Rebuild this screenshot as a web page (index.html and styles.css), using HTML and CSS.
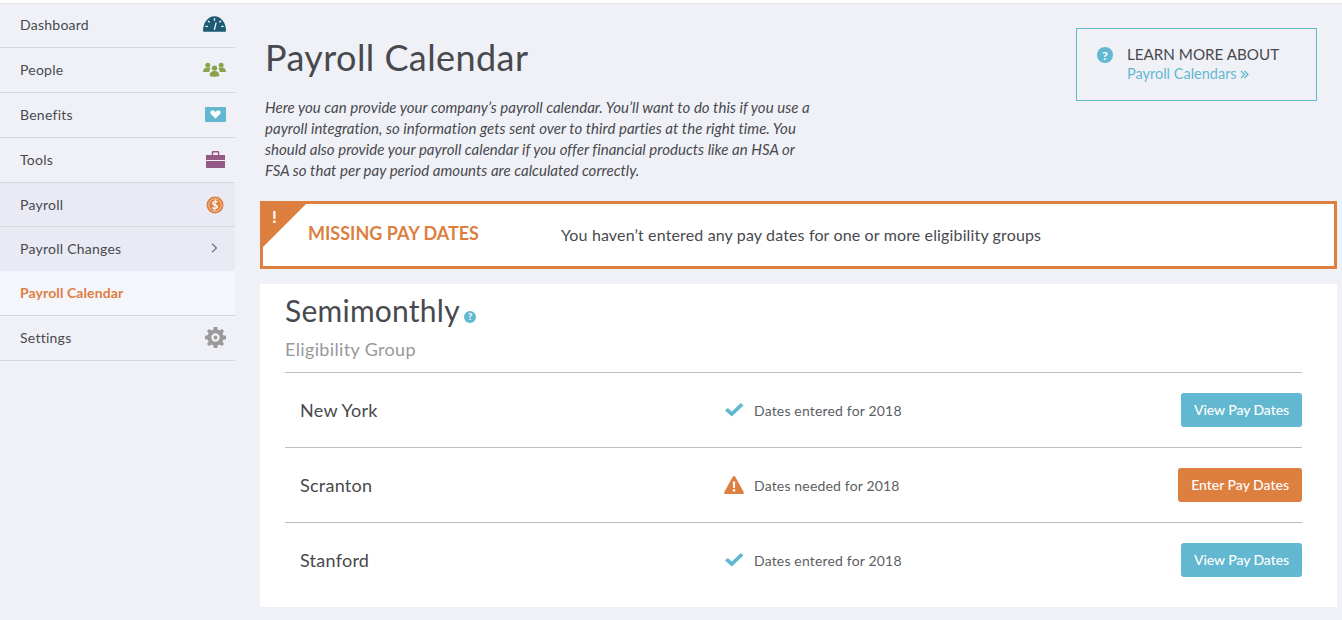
FILE: index.html
```html
<!DOCTYPE html>
<html lang="en">
<head>
    <meta charset="UTF-8">
    <title>Payroll Calendar</title>
    <link rel="stylesheet" href="styles.css">
</head>
<body>

<div class="layout">
    <div class="sidebar">
        <a class="nav-item">Dashboard
            <svg class="nav-icon" width="23" height="16" viewBox="0 0 24 16"><path fill="#1d5a73" d="M0 15C0 6.500 5.400 0 12 0s12 6.500 12 15c0 .6-.3 1-1 1H1c-.7 0-1-.4-1-1z"/><path stroke="#f0f1f7" stroke-width="1.400" stroke-linecap="round" d="M12 13.500l1.600-6.500M12 2.500v1.500M5.500 5l1 1M18.500 5l-1 1M3 10.500h1.500M21 10.500h-1.500"/></svg>
        </a>
        <a class="nav-item">People
            <svg class="nav-icon" width="23" height="15" viewBox="0 0 24 15"><g fill="#8aa349"><circle cx="5" cy="3" r="2.600"/><circle cx="19" cy="3" r="2.600"/><path d="M0 10c0-3 2-4.500 5-4.500 1.500 0 2.500.4 3 1-1 1-1.500 2-1.500 3.500H1c-.6 0-1 0-1-.001zM24 10c0-3-2-4.500-5-4.500-1.500 0-2.500.4-3 1 1 1 1.500 2 1.500 3.500H23c.6 0 1 0 1-.001z"/><circle cx="12" cy="6" r="2.800"/><path d="M7 13.500c0-3 2-4.500 5-4.500s5 1.500 5 4.500c0 1-1 1.500-5 1.500s-5-.5-5-1.500z"/></g></svg>
        </a>
        <a class="nav-item">Benefits
            <svg class="nav-icon" width="21" height="15" viewBox="0 0 20 15" preserveAspectRatio="none"><rect width="20" height="15" rx="1" fill="#62b8d1"/><path fill="#fff" d="M10 11.500L5.800 7.300C4.300 5.500 5.400 3.500 7.200 3.500c1.200 0 2.200.7 2.800 1.600.6-.9 1.600-1.600 2.800-1.600 1.800 0 2.900 2 1.400 3.800z"/></svg>
        </a>
        <a class="nav-item">Tools
            <svg class="nav-icon nav-tools" width="19" height="17" viewBox="0 0 20 17" preserveAspectRatio="none"><g fill="#945a85"><path d="M0 4h20v5H0zM0 10h20v7H0z"/><path d="M6 4V1.500C6 .7 6.500 0 7.500 0h5c1 0 1.500.7 1.500 1.500V4h-1.500V1.500h-5V4z"/></g></svg>
        </a>
        <a class="nav-item nav-open nav-parent">Payroll
            <svg class="nav-icon nav-coin" width="18" height="18" viewBox="0 0 18 18"><circle cx="9" cy="9" r="8.500" fill="#dd7f3f"/><circle cx="9" cy="9" r="6.300" fill="none" stroke="#f6d9c4" stroke-width=".8"/><text class="coin-text" x="9" y="13">$</text></svg>
        </a>
        <a class="nav-item nav-open nav-child">Payroll Changes
            <svg class="nav-icon nav-chevron" width="7" height="10" viewBox="0 0 7 10"><path fill="none" stroke="#6d7077" stroke-width="1.200" d="M1 .7L5.500 5 1 9.300"/></svg>
        </a>
        <a class="nav-item nav-current">Payroll Calendar</a>
        <a class="nav-item">Settings
            <svg class="nav-icon" width="21" height="21" viewBox="0 0 20 20"><path fill="#9a9a9a" fill-rule="evenodd" d="M8.300 0h3.400l.5 2.700 1.600.7 2.300-1.500 2 2-1.500 2.300.7 1.600 2.700.5v3.400l-2.700.5-.7 1.600 1.500 2.300-2 2-2.300-1.500-1.600.7-.5 2.700H8.300l-.5-2.700-1.600-.7-2.300 1.500-2-2 1.500-2.300-.7-1.600L0 11.700V8.300l2.700-.5.7-1.600-1.500-2.300 2-2 2.300 1.500 1.600-.7zM10 6a4 4 0 1 0 0 8 4 4 0 0 0 0-8zm0 2.200a1.800 1.800 0 1 1 0 3.600 1.800 1.800 0 0 1 0-3.600z"/></svg>
        </a>
    </div>

    <div class="content">
        <div class="page-head">
            <div class="page-intro">
                <h1>Payroll Calendar</h1>
                <p>Here you can provide your company’s payroll calendar. You’ll want to do this if you use a payroll integration, so information gets sent over to third parties at the right time. You should also provide your payroll calendar if you offer financial products like an HSA or FSA so that per pay period amounts are calculated correctly.</p>
            </div>
            <div class="learn-box">
                <span class="help-dot help-large">?</span>
                <div>
                    <div class="learn-title">LEARN MORE ABOUT</div>
                    <a class="learn-link">Payroll Calendars
                        <svg width="9" height="9" viewBox="0 0 9 9"><path fill="none" stroke="#62b8d1" stroke-width="1.300" d="M1 1l3.500 3.500L1 8M4.500 1L8 4.500 4.500 8"/></svg>
                    </a>
                </div>
            </div>
        </div>

        <div class="alert">
            <div class="alert-corner"></div>
            <span class="alert-mark">!</span>
            <div class="alert-title">MISSING PAY DATES</div>
            <div class="alert-text">You haven’t entered any pay dates for one or more eligibility groups</div>
        </div>

        <div class="card">
            <h2>Semimonthly <span class="help-dot help-small">?</span></h2>
            <div class="card-sub">Eligibility Group</div>

            <div class="group-row">
                <div class="group-name">New York</div>
                <div class="group-status">
                    <span class="status-icon"><svg width="19" height="14" viewBox="0 0 19 14"><path fill="#62b8d1" d="M0 7.500L2.800 5l4 3.500L15.800 0 18.500 2.500 6.800 13.500z"/></svg></span>
                    Dates entered for 2018
                </div>
                <a class="btn btn-blue">View Pay Dates</a>
            </div>
            <div class="group-row">
                <div class="group-name">Scranton</div>
                <div class="group-status">
                    <span class="status-icon"><svg width="20" height="18" viewBox="0 0 20 18"><path fill="#dd7f3f" fill-rule="evenodd" d="M10 0c.6 0 1 .3 1.300.8l8.500 15.500c.4.800-.1 1.700-1 1.700H1.200c-.9 0-1.400-.9-1-1.700L8.700.8C9 .3 9.400 0 10 0zM8.800 5.500l.3 6.500h1.800l.3-6.500zM8.800 13.300v2.200h2.400v-2.200z"/></svg></span>
                    Dates needed for 2018
                </div>
                <a class="btn btn-orange">Enter Pay Dates</a>
            </div>
            <div class="group-row">
                <div class="group-name">Stanford</div>
                <div class="group-status">
                    <span class="status-icon"><svg width="19" height="14" viewBox="0 0 19 14"><path fill="#62b8d1" d="M0 7.500L2.800 5l4 3.500L15.800 0 18.500 2.500 6.800 13.500z"/></svg></span>
                    Dates entered for 2018
                </div>
                <a class="btn btn-blue">View Pay Dates</a>
            </div>
        </div>
    </div>
</div>

</body>
</html>
```

FILE: styles.css
```css
html, body {
    height: 100%;
}
body {
    margin: 0;
    font-family: 'Lato', sans-serif;
    background-color: #f0f1f7;
    color: #47494e;
    overflow: hidden;
}
.layout {
    display: flex;
    border-top: 3px solid #fff;
    box-shadow: inset 0 1px 0 #e4e4e6;
    height: 617px;
}

/* sidebar */
.sidebar {
    width: 235px;
    flex: none;
}
.nav-item {
    display: flex;
    align-items: center;
    justify-content: space-between;
    box-sizing: border-box;
    height: 45px;
    padding: 0 9px 2px 20px;
    font-size: 14px;
    letter-spacing: 0.25px;
    border-bottom: 1px solid #d6d7da;
}
.nav-parent {
    height: 44px;
    padding-bottom: 0;
}
.nav-open {
    background-color: #e9eaf3;
}
.nav-child {
    height: 44px;
    border-bottom: none;
}
.nav-current {
    height: 45px;
    background-color: #f5f6fb;
    color: #dd7f3f;
    font-weight: 700;
    letter-spacing: 0.1px;
}
.nav-tools {
    margin-right: 1px;
}
.nav-coin {
    margin-right: 2px;
}
.nav-chevron {
    margin-right: 8px;
}
.coin-text {
    font-family: 'Lato', sans-serif;
    font-size: 12px;
    font-weight: 700;
    fill: #fff;
    text-anchor: middle;
}

/* main column */
.content {
    flex: none;
    width: 1077px;
    margin-left: 25px;
}
.page-head {
    display: flex;
    justify-content: space-between;
    align-items: flex-start;
    height: 198px;
}
.page-intro {
    width: 552px;
    padding: 30px 0 0 5px;
}
h1 {
    margin: 0 0 16px;
    font-size: 36px;
    font-weight: 400;
    line-height: 48px;
    letter-spacing: 0.42px;
}
.page-intro p {
    margin: 0;
    font-size: 15px;
    font-style: italic;
    line-height: 21px;
    letter-spacing: 0.03px;
}
.learn-box {
    display: flex;
    box-sizing: border-box;
    width: 241px;
    height: 73px;
    margin: 25px 20px 0 0;
    padding: 15px 20px;
    border: 1px solid #62b8d1;
}
.learn-title {
    font-size: 15.2px;
    line-height: 20px;
}
.learn-link {
    display: block;
    font-size: 14.5px;
    line-height: 20px;
    color: #62b8d1;
}
.help-dot {
    display: inline-flex;
    align-items: center;
    justify-content: center;
    border-radius: 50%;
    background-color: #62b8d1;
    color: #fff;
    font-weight: 900;
}
.help-large {
    width: 16px;
    height: 16px;
    margin: 3px 14px 0 0;
    font-size: 12px;
}
.help-small {
    width: 12px;
    height: 12px;
    margin-left: -3px;
    font-size: 9px;
    vertical-align: 2px;
}

/* alert */
.alert {
    position: relative;
    display: flex;
    align-items: center;
    box-sizing: border-box;
    height: 68px;
    border: 3px solid #dd7f3f;
    background-color: #fff;
}
.alert-corner {
    position: absolute;
    top: 0;
    left: 0;
    border-top: 43px solid #dd7f3f;
    border-right: 43px solid transparent;
}
.alert-mark {
    position: absolute;
    top: 2px;
    left: 9px;
    color: #fff;
    font-size: 17px;
    font-weight: 700;
}
.alert-title {
    width: 253px;
    padding-left: 45px;
    box-sizing: border-box;
    margin-bottom: 5px;
    color: #dd7f3f;
    font-size: 18px;
    font-weight: 700;
}
.alert-text {
    margin: 0 0 2px 45px;
    font-size: 16px;
    letter-spacing: 0.14px;
}

/* eligibility card */
.card {
    box-sizing: border-box;
    height: 323px;
    margin-top: 15px;
    padding: 6px 35px 0 25px;
    background-color: #fff;
}
h2 {
    margin: 0;
    font-size: 30px;
    font-weight: 400;
    line-height: 40px;
    letter-spacing: 0.25px;
}
.card-sub {
    margin-top: 7px;
    padding-bottom: 11px;
    font-size: 18px;
    line-height: 24px;
    letter-spacing: 0.35px;
    color: #97999c;
}
.group-row {
    display: flex;
    align-items: center;
    height: 75px;
    padding-left: 15px;
    border-top: 1px solid #bdbdbd;
    box-sizing: border-box;
}
.group-name {
    width: 424px;
    font-size: 18px;
    letter-spacing: 0.25px;
}
.group-status {
    display: flex;
    align-items: center;
    flex: 1;
    font-size: 14px;
    letter-spacing: 0.17px;
    color: #5c5e62;
}
.status-icon {
    display: flex;
    justify-content: center;
    width: 20px;
    margin-right: 10px;
}
.btn {
    display: block;
    height: 34px;
    padding: 0 13px;
    border-radius: 3px;
    color: #fff;
    font-size: 14px;
    font-weight: 500;
    line-height: 34px;
}
.btn-blue {
    background-color: #62b8d1;
    letter-spacing: -0.07px;
}
.btn-orange {
    background-color: #dd7f3f;
}
```
